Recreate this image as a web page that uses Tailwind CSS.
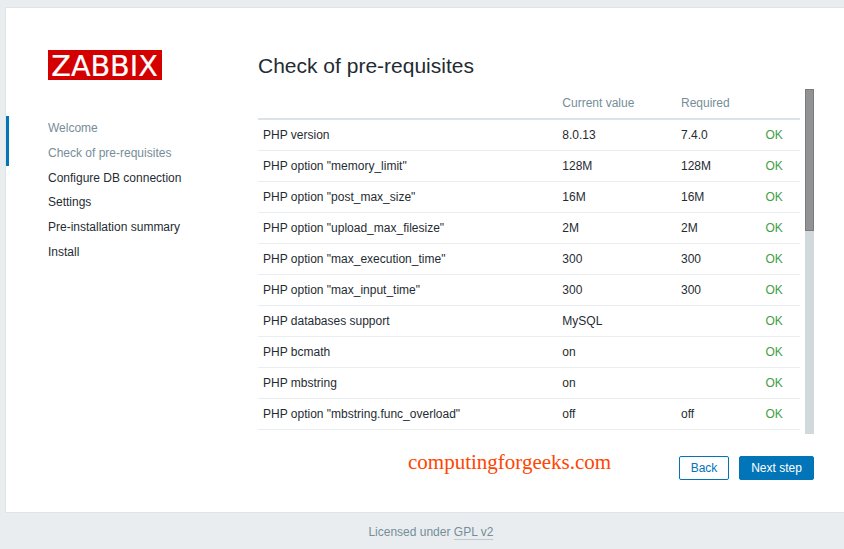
<!DOCTYPE html>
<html lang="en">
<head>
  <meta charset="UTF-8">
  <meta name="viewport" content="width=device-width, initial-scale=1.0">
  <title>Installation</title>
  <script src="https://cdn.jsdelivr.net/npm/@tailwindcss/browser@4"></script>
</head>
<body class="h-[549px] overflow-hidden bg-[#e9edf0] pt-[7px] pl-[5px] text-xs text-[#1f2c33] font-['Liberation_Sans',Arial,sans-serif]">

  <!-- Setup container -->
  <main class="flex h-[506px] border-y border-l border-[#dfe4e7] bg-white">

    <!-- Left side: logo and steps -->
    <aside class="w-[252px] shrink-0 pt-[42px]">
      <svg class="ml-[42px] block h-[30px] w-[114px] overflow-visible bg-[#d40000]" viewBox="0 0 114 30" role="img" aria-label="Zabbix">
        <text x="3.3" y="25.7" textLength="106.5" lengthAdjust="spacingAndGlyphs" font-family="DejaVu Sans, sans-serif" font-size="29" fill="#fff" stroke="#fff" stroke-width="0.2">ZABBIX</text>
      </svg>
      <ul class="mt-9 leading-[24.8px]">
        <li class="border-l-3 border-[#0275b8] pl-[39px] text-[#768d99]">Welcome</li>
        <li class="border-l-3 border-[#0275b8] pl-[39px] text-[#768d99]">Check of pre-requisites</li>
        <li class="pl-[42px]">Configure DB connection</li>
        <li class="pl-[42px]">Settings</li>
        <li class="pl-[42px]">Pre-installation summary</li>
        <li class="pl-[42px]">Install</li>
      </ul>
    </aside>

    <!-- Right side -->
    <section class="w-[556px] shrink-0 pt-[45px]">
      <h1 class="h-9 text-[21px] leading-[25px]">Check of pre-requisites</h1>

      <div class="flex h-[345px] items-start justify-between overflow-hidden">
        <table class="h-[340px] w-[542px] table-fixed border-collapse text-left">
          <colgroup>
            <col class="w-[299px]">
            <col class="w-[119px]">
            <col class="w-[84px]">
            <col class="w-[40px]">
          </colgroup>
          <thead>
            <tr class="h-[30px] border-b-2 border-[#dce2e5] text-[#768d99]">
              <th></th>
              <th class="px-[5.3px] pb-[2px] font-normal">Current value</th>
              <th class="px-[5px] pb-[2px] font-normal">Required</th>
              <th></th>
            </tr>
          </thead>
          <tbody id="requirements"></tbody>
        </table>

        <!-- Scrollbar -->
        <div class="h-[345px] w-[9px] bg-[#d1d9dc]">
          <div class="h-[142px] border border-[#7b7b7b] bg-[#919294]"></div>
        </div>
      </div>

      <!-- Buttons -->
      <div class="mt-[22px] flex items-start">
        <div class="-mt-[6px] ml-[150px] grow font-['Liberation_Serif',serif] text-[21px] leading-6 text-[#ff4500]">computingforgeeks.com</div>
        <button class="h-6 w-[50px] rounded-xs border border-[#0275b8] bg-white text-[#0275b8]">Back</button>
        <button class="ml-[10px] h-6 w-[75px] rounded-xs border border-[#0275b8] bg-[#0275b8] text-white">Next step</button>
      </div>
    </section>
  </main>

  <footer class="pt-3 pl-[363.4px] leading-[14px] text-[#768d99]">
    Licensed under <a href="#" class="inline-block border-b border-[#c0c9ce]">GPL v2</a>
  </footer>

  <script>
    const requirements = [
      ['PHP version', '8.0.13', '7.4.0'],
      ['PHP option "memory_limit"', '128M', '128M'],
      ['PHP option "post_max_size"', '16M', '16M'],
      ['PHP option "upload_max_filesize"', '2M', '2M'],
      ['PHP option "max_execution_time"', '300', '300'],
      ['PHP option "max_input_time"', '300', '300'],
      ['PHP databases support', 'MySQL', ''],
      ['PHP bcmath', 'on', ''],
      ['PHP mbstring', 'on', ''],
      ['PHP option "mbstring.func_overload"', 'off', 'off'],
    ];

    document.getElementById('requirements').innerHTML = requirements.map(([name, current, required]) => `
      <tr class="h-[31px] border-b border-[#ebeef0]">
        <td class="px-[5px]">${name}</td>
        <td class="px-[5.3px]">${current}</td>
        <td class="px-[5px]">${required}</td>
        <td class="px-[5.5px] text-[#429e47]">OK</td>
      </tr>
    `).join('');
  </script>
</body>
</html>
